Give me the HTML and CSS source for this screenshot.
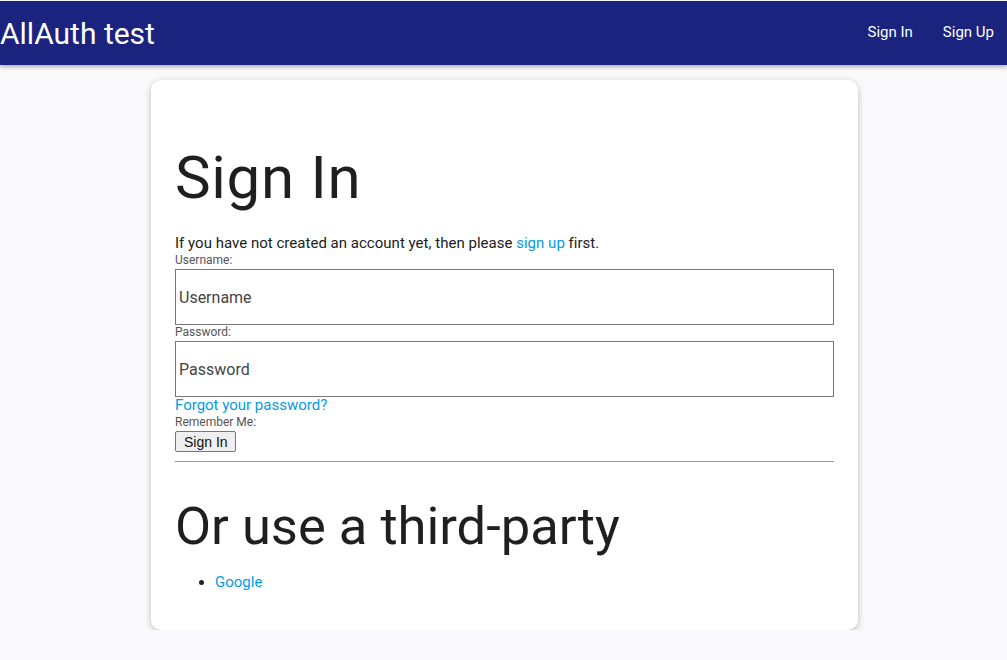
FILE: index.html
```html
<!DOCTYPE html>
<html lang="en">
<head>
  <meta charset="UTF-8" />
  <meta name="viewport" content="width=device-width, initial-scale=1" />
  <title>Sign In - AllAuth test</title>
  <link rel="stylesheet" href="styles.css">
</head>
<body>
  <header class="topbar">
    <a href="#" class="brand">AllAuth test</a>
    <nav class="topnav">
      <a href="#">Sign In</a>
      <a href="#">Sign Up</a>
    </nav>
  </header>

  <main class="card">
    <h1>Sign In</h1>

    <form class="login-form">
      <p>If you have not created an account yet, then please <a href="#">sign up</a> first.</p>

      <label for="id_login">Username:</label>
      <input type="text" id="id_login" placeholder="Username" />

      <label for="id_password">Password:</label>
      <input type="password" id="id_password" placeholder="Password" />

      <a href="#" class="forgot">Forgot your password?</a>

      <label for="id_remember" class="remember">Remember Me:</label>
      <div>
        <button type="submit">Sign In</button>
      </div>
    </form>

    <hr>

    <h2>Or use a third-party</h2>
    <ul class="providers">
      <li><a href="#">Google</a></li>
    </ul>
  </main>
</body>
</html>
```

FILE: styles.css
```css
body {
  margin: 0;
  padding-top: 1px;
  background: #f9f9fc;
  font-family: Roboto, 'Noto Sans', sans-serif;
  color: #212121;
}
a {
  color: #039be5;
  text-decoration: none;
}
.topbar {
  height: 64px;
  background: #1a237e;
  display: flex;
  align-items: center;
  justify-content: space-between;
  box-shadow: 0 2px 4px rgba(0, 0, 0, 0.3);
}
.brand {
  color: #fff;
  font-size: 30px;
}
.topnav {
  display: flex;
  gap: 30px;
  padding-right: 13px;
  padding-bottom: 3px;
}
.topnav a {
  color: #fff;
  font-size: 15px;
}
.card {
  width: 707px;
  box-sizing: border-box;
  margin: 15px 0 0 151px;
  background: #fff;
  border-radius: 10px;
  padding: 24px;
  box-shadow: 0 2px 6px rgba(0, 0, 0, 0.25);
}
h1 {
  font-size: 60px;
  font-weight: 400;
  letter-spacing: 0.7px;
  margin: 38px 0 21px;
  color: #1f1f1f;
}
h2 {
  font-size: 52.5px;
  font-weight: 400;
  margin: 33px 0 16px;
  color: #1f1f1f;
}
.login-form {
  display: flex;
  flex-direction: column;
  align-items: stretch;
}
.login-form p {
  margin: 0 0 1px;
  font-size: 15px;
  line-height: 18px;
  letter-spacing: 0.02px;
}
.login-form label {
  font-size: 12px;
  line-height: 15px;
  color: #555;
}
.login-form input {
  height: 56px;
  box-sizing: border-box;
  border: 1px solid #777;
  padding: 0 3px;
  font-family: inherit;
  font-size: 16px;
  color: #212121;
  margin: 1px 0 0;
}
.login-form input::placeholder {
  color: #444;
}
.forgot {
  font-size: 15px;
  line-height: 15px;
  margin-top: 1px;
  align-self: flex-start;
}
.login-form .remember {
  margin-top: 2px;
}
.login-form button {
  margin-top: 1px;
  font-family: 'Liberation Sans', Arial, sans-serif;
  font-size: 14px;
  color: #111;
  padding: 2px 7px 1px 8px;
  background: #efefef;
  border: 1px solid #767676;
  border-radius: 2px;
}
hr {
  margin: 9px 0 0;
  border: 0;
  border-top: 1px solid #999;
}
.providers {
  margin: 0 0 15px;
  padding-left: 40px;
  font-size: 15px;
  line-height: 18px;
}
```
